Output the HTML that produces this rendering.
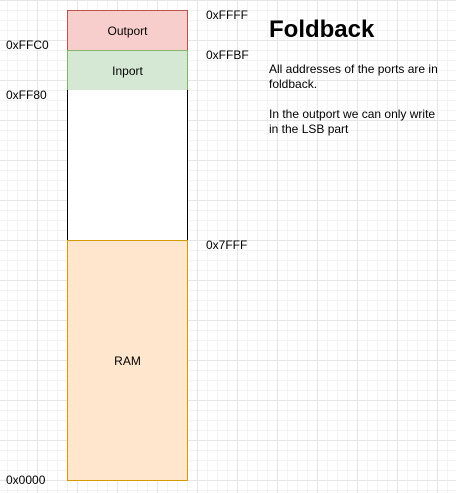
<!DOCTYPE html>
<html><head><style>
html,body{margin:0;padding:0;}
body{width:456px;height:493px;position:relative;overflow:hidden;background:#fff;
background-image:
linear-gradient(to right,#e6e6e6 1px,transparent 1px),
linear-gradient(to bottom,#e6e6e6 1px,transparent 1px),
linear-gradient(to right,#f3f3f3 1px,transparent 1px),
linear-gradient(to bottom,#f3f3f3 1px,transparent 1px);
background-size:40px 40px,40px 40px,10px 10px,10px 10px;
background-position:-3px 0,0 0,-3px 0,0 0;
font-family:"Liberation Sans",sans-serif;color:#000;}
.b{position:absolute;box-sizing:border-box;display:flex;align-items:center;justify-content:center;font-size:12px;}
.t{position:absolute;font-size:12px;line-height:14px;white-space:nowrap;}
</style></head><body>
<div class="b" style="left:67px;top:10px;width:121px;height:41px;background:#f8cecc;border:1px solid #b85450;">Outport</div>
<div class="b" style="left:67px;top:50px;width:121px;height:41px;background:#d5e8d4;border:1px solid #82b366;">Inport</div>
<div class="b" style="left:67px;top:90px;width:121px;height:151px;background:#fff;border:1px solid #000;border-top:none;border-bottom:none;"></div>
<div class="b" style="left:67px;top:240px;width:121px;height:241px;background:#ffe6cc;border:1px solid #d79b00;">RAM</div>
<div class="t" style="left:206px;top:8px;">0xFFFF</div>
<div class="t" style="left:6px;top:38px;">0xFFC0</div>
<div class="t" style="left:206px;top:48px;">0xFFBF</div>
<div class="t" style="left:6px;top:88px;">0xFF80</div>
<div class="t" style="left:206px;top:238px;">0x7FFF</div>
<div class="t" style="left:6px;top:473px;">0x0000</div>
<div class="t" style="left:269px;top:16px;font-size:24px;font-weight:bold;line-height:28px;">Foldback</div>
<div class="t" style="left:269px;top:62px;line-height:15px;">All addresses of the ports are in<br>foldback.<br><br>In the outport we can only write<br>in the LSB part</div>
</body></html>
